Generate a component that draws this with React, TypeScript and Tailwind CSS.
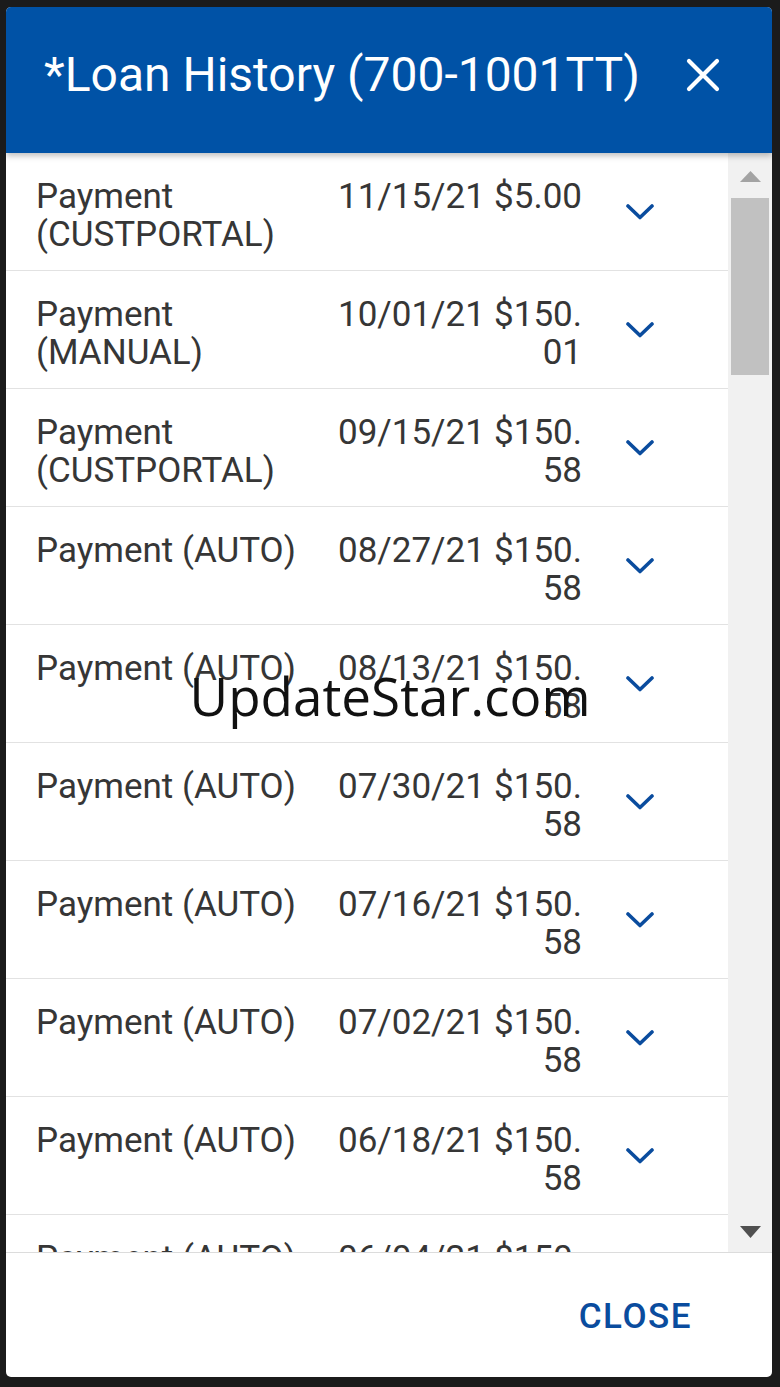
import React from "react";

interface LoanTxn {
  label: string;
  date: string;
  amount: string;
}

const txns: LoanTxn[] = [
  { label: "Payment (CUSTPORTAL)", date: "11/15/21", amount: "$5.00" },
  { label: "Payment (MANUAL)", date: "10/01/21", amount: "$150.01" },
  { label: "Payment (CUSTPORTAL)", date: "09/15/21", amount: "$150.58" },
  { label: "Payment (AUTO)", date: "08/27/21", amount: "$150.58" },
  { label: "Payment (AUTO)", date: "08/13/21", amount: "$150.58" },
  { label: "Payment (AUTO)", date: "07/30/21", amount: "$150.58" },
  { label: "Payment (AUTO)", date: "07/16/21", amount: "$150.58" },
  { label: "Payment (AUTO)", date: "07/02/21", amount: "$150.58" },
  { label: "Payment (AUTO)", date: "06/18/21", amount: "$150.58" },
  { label: "Payment (AUTO)", date: "06/04/21", amount: "$150.58" },
  { label: "Payment (AUTO)", date: "05/21/21", amount: "$150.58" },
];

const Chevron = () => (
  <svg width="28" height="16" viewBox="0 0 28 16" fill="none">
    <polyline
      points="2,2 14,13.5 26,2"
      stroke="#0a4c9e"
      strokeWidth="3.6"
      strokeLinecap="round"
      strokeLinejoin="round"
    />
  </svg>
);

const TxnRow = ({ txn }: { txn: LoanTxn }) => (
  <div className="flex items-start border-b border-[#e2e2e2] pl-[30px] pt-[25px] pb-[16px] text-[35px] leading-[38px] text-[#363636]">
    <div className="w-[302px] shrink-0">{txn.label}</div>
    <div className="w-[152px] shrink-0 whitespace-nowrap">{txn.date}</div>
    <div className="w-[92px] shrink-0 text-right break-all">{txn.amount}</div>
    <div className="ml-[44px] mb-[8px] w-[28px] self-center">
      <Chevron />
    </div>
  </div>
);

const Scrollbar = () => (
  <div className="flex w-[44px] shrink-0 flex-col bg-[#f1f1f1]">
    <div className="flex h-[45px] items-center justify-center pt-[2px]">
      <svg width="21" height="11" viewBox="0 0 21 11">
        <polygon points="10.5,0 21,11 0,11" fill="#a3a3a3" />
      </svg>
    </div>
    <div className="mx-[3px] h-[177px] bg-[#c1c1c1]" />
    <div className="flex-1" />
    <div className="flex h-[46px] items-start justify-center pt-[20px]">
      <svg width="21" height="12" viewBox="0 0 21 12">
        <polygon points="0,0 21,0 10.5,12" fill="#505050" />
      </svg>
    </div>
  </div>
);

export default function App() {
  return (
    <div className="relative min-h-screen bg-[#1b1b1b] pl-[6px] pr-[8px] pt-[7px] pb-[10px] font-['Roboto',sans-serif]">
      <div className="flex h-[1370px] flex-col overflow-hidden rounded-[5px] bg-white">
        <div className="relative z-10 flex h-[146px] shrink-0 items-center justify-between bg-[#0052a6] pl-[38px] pr-[52px] pb-[10px] shadow-[0_3px_6px_rgba(0,0,0,0.25)]">
          <h1 className="text-[48px] leading-none text-white">*Loan History (700-1001TT)</h1>
          <button className="flex h-[34px] w-[34px] items-center justify-center">
            <svg width="34" height="34" viewBox="0 0 34 34">
              <path d="M3 3 L31 31 M31 3 L3 31" stroke="white" strokeWidth="4.2" strokeLinecap="round" />
            </svg>
          </button>
        </div>

        <div className="flex min-h-0 flex-1">
          <div className="min-w-0 flex-1 overflow-hidden">
            {txns.map((t, i) => (
              <TxnRow key={i} txn={t} />
            ))}
          </div>
          <Scrollbar />
        </div>

        <div className="flex h-[125px] shrink-0 items-center justify-end border-t border-[#dcdcdc] pr-[80px] pt-[2px]">
          <button className="text-[35px] font-medium leading-none tracking-[1.5px] text-[#0a4c9e]">
            CLOSE
          </button>
        </div>
      </div>

      <div className="pointer-events-none absolute inset-0 flex items-center justify-center pt-[4px]">
        <span className="font-['Open_Sans',sans-serif] text-[53px] leading-none text-[#111111]">
          UpdateStar.com
        </span>
      </div>
    </div>
  );
}
